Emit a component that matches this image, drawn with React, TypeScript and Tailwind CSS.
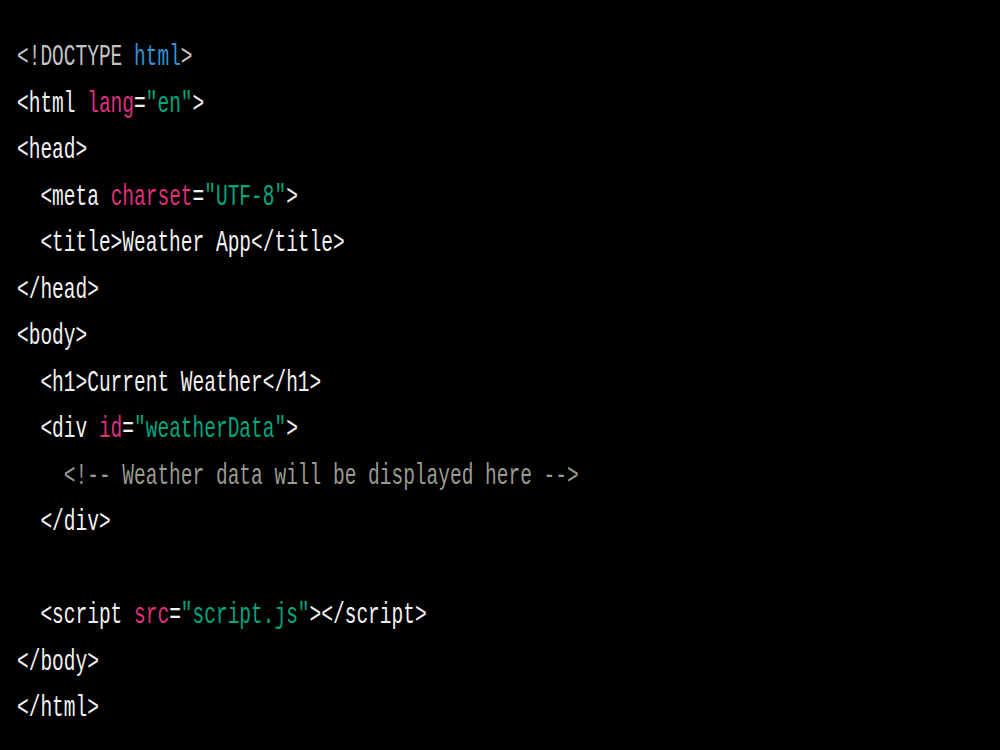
const C = {
  tag: "text-[#f2f2f2]",
  meta: "text-[#c4c4c4]",
  kw: "text-[#2e95d3]",
  attr: "text-[#df3079]",
  str: "text-[#00a67d]",
  cmt: "text-[#9a9a92]",
};

type Seg = [string, string];

const lines: Seg[][] = [
  [["<!DOCTYPE ", C.meta], ["html", C.kw], [">", C.meta]],
  [["<html ", C.tag], ["lang", C.attr], ["=", C.tag], ['"en"', C.str], [">", C.tag]],
  [["<head>", C.tag]],
  [["  <meta ", C.tag], ["charset", C.attr], ["=", C.tag], ['"UTF-8"', C.str], [">", C.tag]],
  [["  <title>Weather App</title>", C.tag]],
  [["</head>", C.tag]],
  [["<body>", C.tag]],
  [["  <h1>Current Weather</h1>", C.tag]],
  [["  <div ", C.tag], ["id", C.attr], ["=", C.tag], ['"weatherData"', C.str], [">", C.tag]],
  [["    <!-- Weather data will be displayed here -->", C.cmt]],
  [["  </div>", C.tag]],
  [["", C.tag]],
  [["  <script ", C.tag], ["src", C.attr], ["=", C.tag], ['"script.js"', C.str], ["></script>", C.tag]],
  [["</body>", C.tag]],
  [["</html>", C.tag]],
];

export default function App() {
  return (
    <div className="h-[750px] w-[1000px] overflow-hidden bg-black pl-[17px] pt-[34px]">
      <pre className="font-['Liberation_Mono',monospace] text-[19.5px] leading-[46.5px]">
        {lines.map((segs, i) => (
          <div key={i} className="h-[46.5px] origin-center scale-y-[1.55] whitespace-pre">
            {segs.map(([t, cls], j) => (
              <span key={j} className={cls}>
                {t}
              </span>
            ))}
          </div>
        ))}
      </pre>
    </div>
  );
}
